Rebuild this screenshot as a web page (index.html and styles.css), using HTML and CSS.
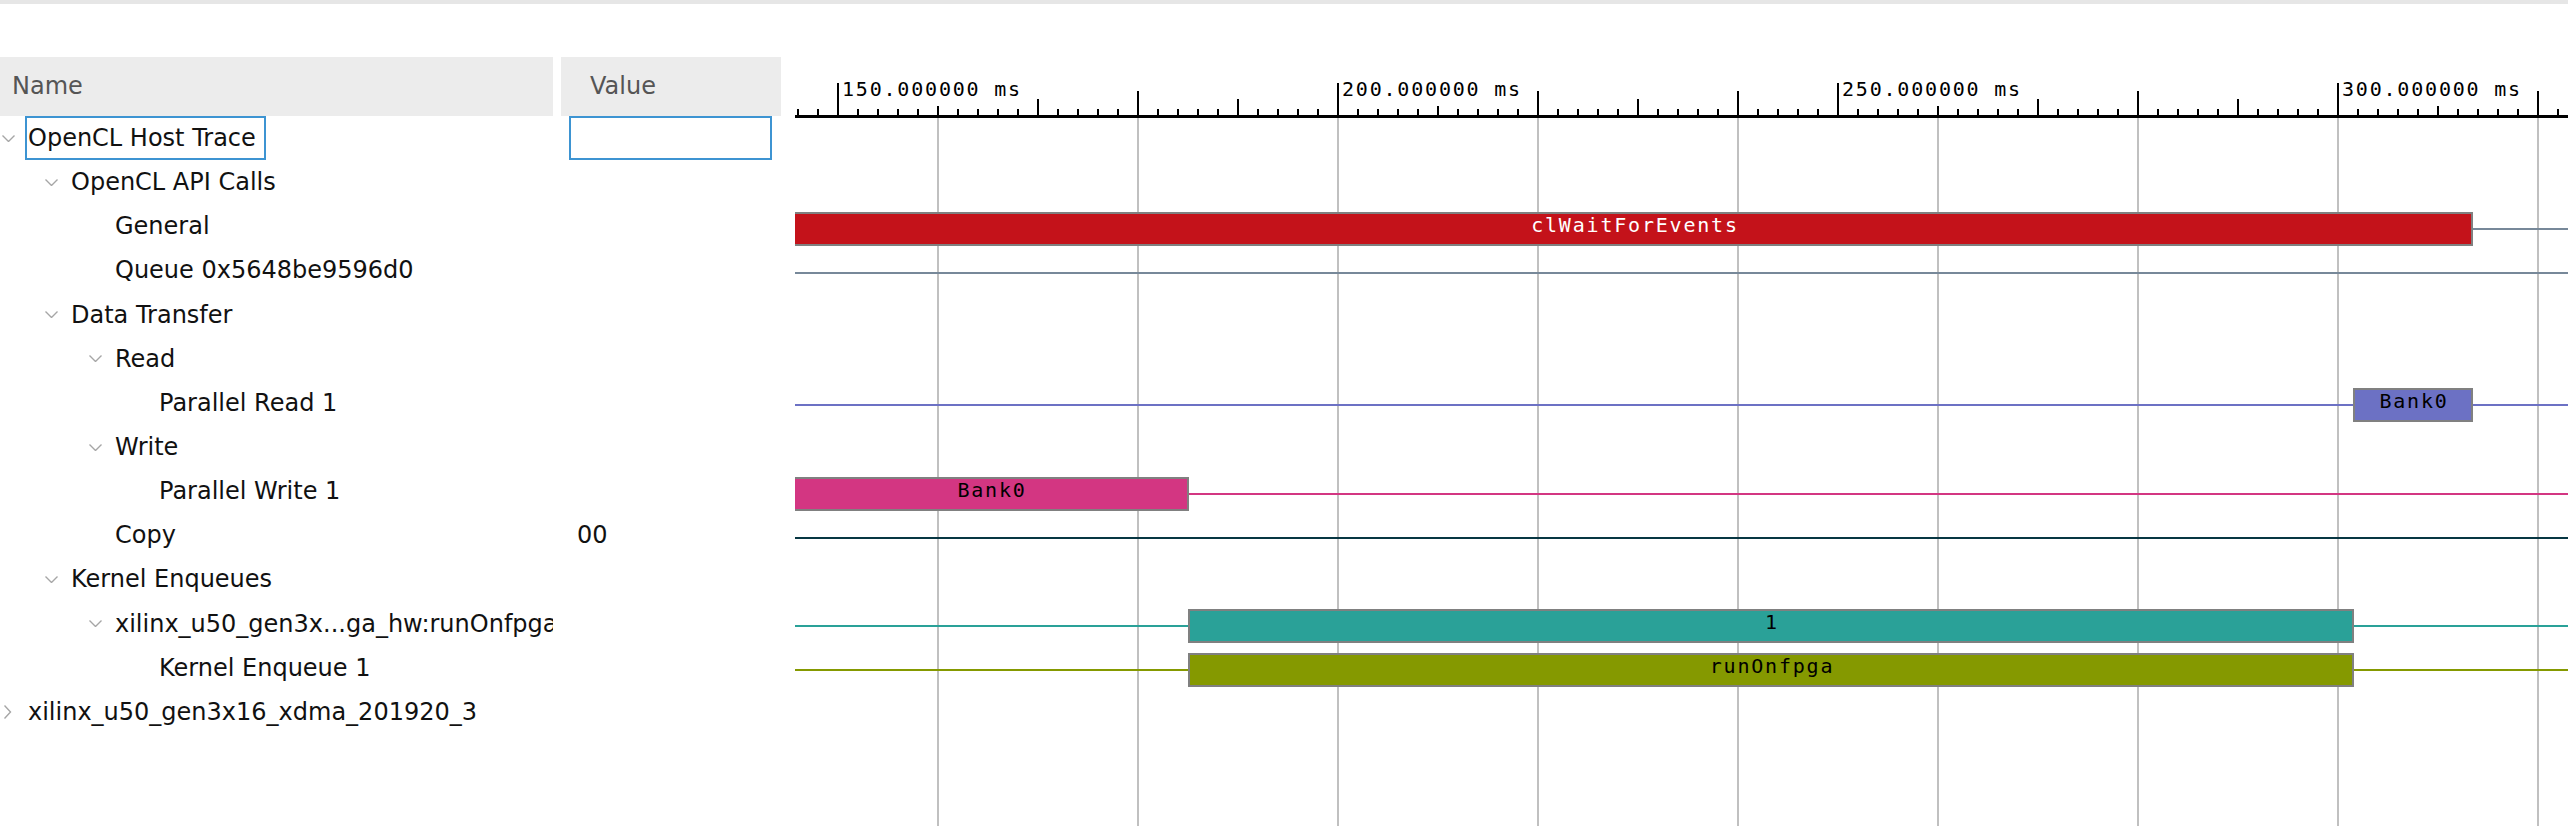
FILE: index.html
```html
<!DOCTYPE html>
<html lang="en">

<head>
    <meta charset="UTF-8">
    <title>Timeline Trace</title>
    <link rel="stylesheet" href="styles.css">
</head>

<body>
    <div class="topbar"></div>

    <div class="main">
        <!-- Tree of trace rows -->
        <div class="tree">
            <div class="tree-head">
                <div class="head-name">Name</div>
                <div class="head-value">Value</div>
            </div>

            <div class="row">
                <div class="cell-name lvl0">
                    <span class="twist"><svg width="13" height="7"><polyline points="0.5,0.5 6.5,6.5 12.5,0.5" /></svg></span>
                    <span class="label selected">OpenCL Host Trace</span>
                </div>
                <div class="cell-value"><span class="value-box"></span></div>
            </div>

            <div class="row">
                <div class="cell-name lvl1">
                    <span class="twist"><svg width="13" height="7"><polyline points="0.5,0.5 6.5,6.5 12.5,0.5" /></svg></span>
                    <span class="label">OpenCL API Calls</span>
                </div>
                <div class="cell-value"></div>
            </div>

            <div class="row">
                <div class="cell-name lvl2">
                    <span class="twist"></span>
                    <span class="label">General</span>
                </div>
                <div class="cell-value"></div>
            </div>

            <div class="row">
                <div class="cell-name lvl2">
                    <span class="twist"></span>
                    <span class="label">Queue 0x5648be9596d0</span>
                </div>
                <div class="cell-value"></div>
            </div>

            <div class="row">
                <div class="cell-name lvl1">
                    <span class="twist"><svg width="13" height="7"><polyline points="0.5,0.5 6.5,6.5 12.5,0.5" /></svg></span>
                    <span class="label">Data Transfer</span>
                </div>
                <div class="cell-value"></div>
            </div>

            <div class="row">
                <div class="cell-name lvl2">
                    <span class="twist"><svg width="13" height="7"><polyline points="0.5,0.5 6.5,6.5 12.5,0.5" /></svg></span>
                    <span class="label">Read</span>
                </div>
                <div class="cell-value"></div>
            </div>

            <div class="row">
                <div class="cell-name lvl3">
                    <span class="twist"></span>
                    <span class="label">Parallel Read 1</span>
                </div>
                <div class="cell-value"></div>
            </div>

            <div class="row">
                <div class="cell-name lvl2">
                    <span class="twist"><svg width="13" height="7"><polyline points="0.5,0.5 6.5,6.5 12.5,0.5" /></svg></span>
                    <span class="label">Write</span>
                </div>
                <div class="cell-value"></div>
            </div>

            <div class="row">
                <div class="cell-name lvl3">
                    <span class="twist"></span>
                    <span class="label">Parallel Write 1</span>
                </div>
                <div class="cell-value"></div>
            </div>

            <div class="row">
                <div class="cell-name lvl2">
                    <span class="twist"></span>
                    <span class="label">Copy</span>
                </div>
                <div class="cell-value">00</div>
            </div>

            <div class="row">
                <div class="cell-name lvl1">
                    <span class="twist"><svg width="13" height="7"><polyline points="0.5,0.5 6.5,6.5 12.5,0.5" /></svg></span>
                    <span class="label">Kernel Enqueues</span>
                </div>
                <div class="cell-value"></div>
            </div>

            <div class="row">
                <div class="cell-name lvl2">
                    <span class="twist"><svg width="13" height="7"><polyline points="0.5,0.5 6.5,6.5 12.5,0.5" /></svg></span>
                    <span class="label">xilinx_u50_gen3x...ga_hw:runOnfpga</span>
                </div>
                <div class="cell-value"></div>
            </div>

            <div class="row">
                <div class="cell-name lvl3">
                    <span class="twist"></span>
                    <span class="label">Kernel Enqueue 1</span>
                </div>
                <div class="cell-value"></div>
            </div>

            <div class="row">
                <div class="cell-name lvl0">
                    <span class="twist"><svg width="8" height="14" class="closed"><polyline points="0.5,0.5 6.5,7 0.5,13.5" /></svg></span>
                    <span class="label">xilinx_u50_gen3x16_xdma_201920_3</span>
                </div>
                <div class="cell-value"></div>
            </div>
        </div>

        <!-- Timeline: 10px per ms, 150 ms at x=837 (page coordinates) -->
        <svg class="timeline" width="1773" height="822" viewBox="795 4 1773 822">
            <defs>
                <pattern id="minor-ticks" x="837" y="109" width="20" height="6" patternUnits="userSpaceOnUse">
                    <rect x="0" y="0" width="2" height="6" fill="#000" />
                </pattern>
                <pattern id="grid" x="937" y="118" width="200" height="10" patternUnits="userSpaceOnUse">
                    <rect x="0" y="0" width="2" height="10" fill="#c0c0c0" />
                </pattern>
            </defs>

            <!-- grid -->
            <rect x="795" y="118" width="1773" height="708" fill="url(#grid)" />

            <!-- ruler -->
            <rect x="795" y="109" width="1773" height="6" fill="url(#minor-ticks)" />
            <g class="ruler" fill="#000">
                <rect x="795" y="115" width="1773" height="3" />

                <rect x="837" y="83" width="2" height="32" />
                <rect x="937" y="106" width="2" height="9" />
                <rect x="1037" y="99" width="2" height="16" />
                <rect x="1137" y="91" width="2" height="24" />
                <rect x="1237" y="99" width="2" height="16" />
                <rect x="1337" y="83" width="2" height="32" />
                <rect x="1437" y="106" width="2" height="9" />
                <rect x="1537" y="91" width="2" height="24" />
                <rect x="1637" y="99" width="2" height="16" />
                <rect x="1737" y="91" width="2" height="24" />
                <rect x="1837" y="83" width="2" height="32" />
                <rect x="1937" y="106" width="2" height="9" />
                <rect x="2037" y="99" width="2" height="16" />
                <rect x="2137" y="91" width="2" height="24" />
                <rect x="2237" y="99" width="2" height="16" />
                <rect x="2337" y="83" width="2" height="32" />
                <rect x="2437" y="106" width="2" height="9" />
                <rect x="2537" y="91" width="2" height="24" />

                <text class="mono" x="842" y="96">150.000000 ms</text>
                <text class="mono" x="1342" y="96">200.000000 ms</text>
                <text class="mono" x="1842" y="96">250.000000 ms</text>
                <text class="mono" x="2342" y="96">300.000000 ms</text>
            </g>

            <!-- track lines -->
            <rect class="line-slate" x="795" y="228" width="1773" height="2" />
            <rect class="line-slate" x="795" y="272" width="1773" height="2" />
            <rect class="line-violet" x="795" y="404" width="1773" height="2" />
            <rect class="line-magenta" x="795" y="493" width="1773" height="2" />
            <rect class="line-dark" x="795" y="537" width="1773" height="2" />
            <rect class="line-cyan" x="795" y="625" width="1773" height="2" />
            <rect class="line-green" x="795" y="669" width="1773" height="2" />

            <!-- events -->
            <rect class="bar bar-red" x="789" y="213" width="1683" height="32" />
            <text class="mono bar-text light" x="1635" y="232" text-anchor="middle">clWaitForEvents</text>

            <rect class="bar bar-violet" x="2354" y="389" width="118" height="32" />
            <text class="mono bar-text" x="2414" y="408" text-anchor="middle">Bank0</text>

            <rect class="bar bar-magenta" x="789" y="478" width="399" height="32" />
            <text class="mono bar-text" x="992" y="497" text-anchor="middle">Bank0</text>

            <rect class="bar bar-cyan" x="1189" y="610" width="1164" height="32" />
            <text class="mono bar-text" x="1772" y="629" text-anchor="middle">1</text>

            <rect class="bar bar-green" x="1189" y="654" width="1164" height="32" />
            <text class="mono bar-text" x="1772" y="673" text-anchor="middle">runOnfpga</text>
        </svg>
    </div>
</body>

</html>
```

FILE: styles.css
```css
/* Page */
body {
    margin: 0;
    font-family: "DejaVu Sans", sans-serif;
    font-size: 24px;
    color: #111;
    background-color: white;
    overflow: hidden;
}

.topbar {
    height: 4px;
    background-color: #e6e6e6;
}

.main {
    display: flex;
}

/* Tree */
.tree {
    width: 795px;
    flex-shrink: 0;
    padding-top: 53px;
}

.tree-head {
    display: flex;
    height: 59px;
    line-height: 59px;
    color: #555;
}

.head-name {
    width: 553px;
    padding-left: 12px;
    box-sizing: border-box;
    background-color: #ececec;
}

.head-value {
    width: 220px;
    margin-left: 8px;
    padding-left: 29px;
    box-sizing: border-box;
    background-color: #ececec;
}

.row {
    display: flex;
    height: 44.15px;
    white-space: nowrap;
}

.cell-name {
    width: 553px;
    flex-shrink: 0;
    display: flex;
    align-items: center;
    overflow: hidden;
    box-sizing: border-box;
}

.lvl0 { padding-left: 2px; }
.lvl1 { padding-left: 45px; }
.lvl2 { padding-left: 89px; }
.lvl3 { padding-left: 133px; }

.twist {
    width: 23px;
    flex-shrink: 0;
    display: flex;
    align-items: center;
}

.twist svg {
    display: block;
}

.twist polyline {
    fill: none;
    stroke: #a6a6a6;
    stroke-width: 1.4;
}

.twist .closed {
    margin-left: 2px;
}

.label {
    flex-shrink: 0;
    height: 44px;
    line-height: 40px;
    padding: 0 8px 0 1px;
    border: 2px solid transparent;
    box-sizing: border-box;
}

.selected {
    border-color: #3d94d2;
}

.cell-value {
    width: 220px;
    margin-left: 8px;
    padding-left: 16px;
    line-height: 44px;
    box-sizing: border-box;
}

.value-box {
    display: block;
    width: 203px;
    height: 44px;
    margin-left: -8px;
    border: 2px solid #3d94d2;
    box-sizing: border-box;
}

/* Timeline */
.timeline {
    display: block;
    flex-shrink: 0;
}

.mono {
    font-family: "DejaVu Sans Mono", monospace;
    font-size: 20px;
    letter-spacing: 1.8px;
    fill: #000;
}

.bar-text.light {
    fill: #fff;
}

.line-slate { fill: #778899; }
.line-violet { fill: #6c71c4; }
.line-magenta { fill: #d33682; }
.line-dark { fill: #073642; }
.line-cyan { fill: #2aa198; }
.line-green { fill: #859900; }

.bar {
    stroke: #808080;
    stroke-width: 2;
}

.bar-red { fill: #c4121a; }
.bar-violet { fill: #6c71c4; }
.bar-magenta { fill: #d33682; }
.bar-cyan { fill: #2aa198; }
.bar-green { fill: #859900; }
```
